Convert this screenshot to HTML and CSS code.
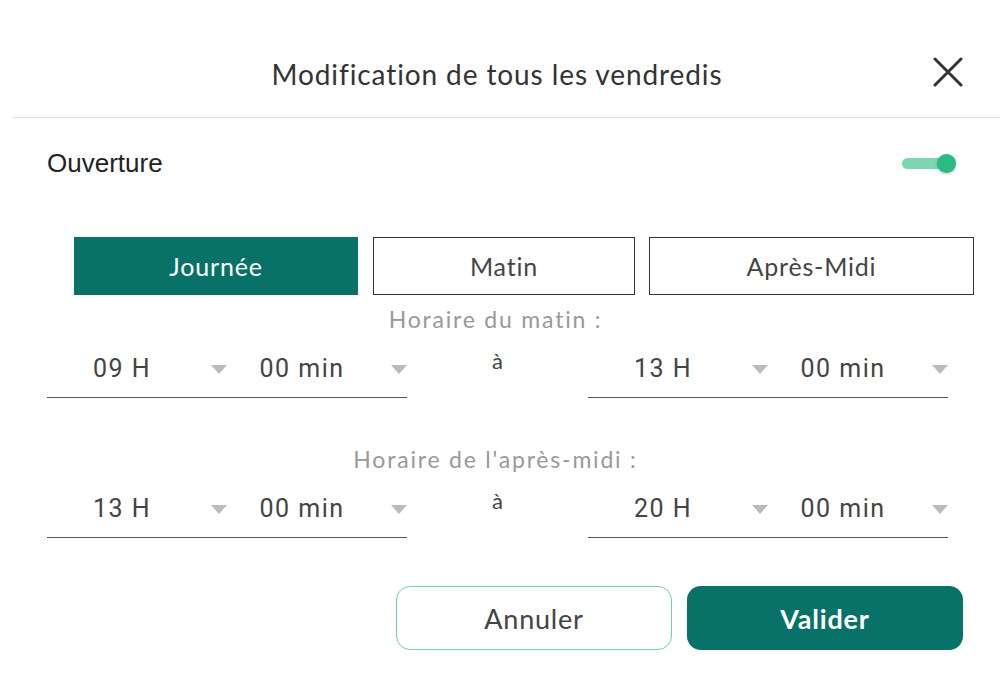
FILE: index.html
```html
<!DOCTYPE html>
<html lang="fr">
<head>
  <meta charset="UTF-8">
  <title>Modification de tous les vendredis</title>
  <link rel="stylesheet" href="styles.css">
</head>
<body>

  <div class="dialog">
    <div class="header">
      <h1 class="title">Modification de tous les vendredis</h1>
      <button class="close" aria-label="Fermer">
        <svg width="30" height="30" viewBox="0 0 30 30"><path d="M2 2 L28 28 M28 2 L2 28" stroke="#333" stroke-width="3" fill="none" stroke-linecap="round"/></svg>
      </button>
    </div>

    <div class="content">
      <div class="open-row">
        <span class="open-label">Ouverture</span>
        <span class="toggle"><span class="knob"></span></span>
      </div>

      <div class="tabs">
        <button class="tab tab-day active">Journée</button>
        <button class="tab tab-morning">Matin</button>
        <button class="tab tab-afternoon">Après-Midi</button>
      </div>

      <div class="period-label">Horaire du matin :</div>
      <div class="period-row">
        <div class="time">
          <div class="select">09 H<span class="arrow"></span></div>
          <div class="select">00 min<span class="arrow"></span></div>
        </div>
        <div class="to">à</div>
        <div class="time">
          <div class="select">13 H<span class="arrow"></span></div>
          <div class="select">00 min<span class="arrow"></span></div>
        </div>
      </div>

      <div class="period-label second">Horaire de l'après-midi :</div>
      <div class="period-row">
        <div class="time">
          <div class="select">13 H<span class="arrow"></span></div>
          <div class="select">00 min<span class="arrow"></span></div>
        </div>
        <div class="to">à</div>
        <div class="time">
          <div class="select">20 H<span class="arrow"></span></div>
          <div class="select">00 min<span class="arrow"></span></div>
        </div>
      </div>

      <div class="actions">
        <button class="btn btn-cancel">Annuler</button>
        <button class="btn btn-ok">Valider</button>
      </div>
    </div>
  </div>

</body>
</html>
```

FILE: styles.css
```css
body {
  margin: 0;
  background: #fff;
  font-family: Lato, "Liberation Sans", sans-serif;
  color: #333;
}

.dialog {
  margin-left: 13px;
  width: 987px;
}

.header {
  position: relative;
  height: 118px;
  box-sizing: border-box;
  border-bottom: 1px solid #ddd;
  padding: 57px 19px 0 0;
  text-align: center;
}

.title {
  margin: 0;
  font-size: 28px;
  font-weight: 400;
  letter-spacing: 0.9px;
  color: #333;
}

.close {
  position: absolute;
  right: 37px;
  top: 57px;
  width: 30px;
  height: 30px;
  padding: 0;
  border: none;
  background: none;
}

.content {
  padding: 0 26px 0 34px;
}

.open-row {
  display: flex;
  justify-content: space-between;
  align-items: center;
  height: 90px;
  padding-right: 25px;
}

.open-label {
  font-family: "Liberation Sans", sans-serif;
  font-size: 26px;
  color: #222;
}

.toggle {
  position: relative;
  width: 47px;
  height: 11px;
  border-radius: 6px;
  background: #7dd6b0;
}

.knob {
  position: absolute;
  right: -7px;
  top: -4px;
  width: 19px;
  height: 19px;
  border-radius: 50%;
  background: #29bb82;
  box-shadow: 0 1px 3px rgba(0, 0, 0, 0.25);
}

.tabs {
  display: flex;
  gap: 15px;
  margin-top: 29px;
  padding-left: 27px;
}

.tab {
  height: 58px;
  font-family: inherit;
  font-size: 25px;
  letter-spacing: 0.8px;
  color: #444;
  background: #fff;
  border: 1.5px solid #333;
  padding: 0;
}

.tab-day { width: 284px; }
.tab-morning { width: 262px; margin-right: -1px; }
.tab-afternoon { width: 325px; }

.tab.active {
  background: #087168;
  border-color: #087168;
  color: #fff;
}

.period-label {
  text-align: center;
  font-size: 23px;
  letter-spacing: 1.8px;
  color: #999;
  margin-top: 12px;
  padding-right: 30px;
  line-height: 24px;
}

.period-label.second {
  margin-top: 49px;
}

.period-row {
  display: flex;
  align-items: flex-start;
  margin-top: 12px;
}

.time {
  display: flex;
  width: 360px;
  height: 54px;
  border-bottom: 1.5px solid #555;
}

.select {
  position: relative;
  width: 180px;
  padding-right: 30px;
  box-sizing: border-box;
  text-align: center;
  font-family: Roboto, sans-serif;
  font-size: 25px;
  letter-spacing: 1.5px;
  line-height: 52px;
  color: #444;
}

.arrow {
  position: absolute;
  right: 0;
  top: 22px;
  width: 0;
  height: 0;
  border-left: 8px solid transparent;
  border-right: 8px solid transparent;
  border-top: 9px solid #bbb;
}

.to {
  width: 181px;
  text-align: center;
  font-size: 22px;
  line-height: 36px;
  color: #444;
}

.actions {
  display: flex;
  justify-content: flex-end;
  gap: 15px;
  margin-top: 48px;
  padding-right: 11px;
}

.btn {
  width: 276px;
  height: 64px;
  border-radius: 14px;
  font-family: inherit;
  font-size: 27px;
  letter-spacing: 0.8px;
  padding: 0;
}

.btn-cancel {
  background: #fff;
  border: 1.5px solid #6fd3a8;
  color: #444;
}

.btn-ok {
  background: #087168;
  border: none;
  color: #fff;
  font-weight: 700;
}
```
